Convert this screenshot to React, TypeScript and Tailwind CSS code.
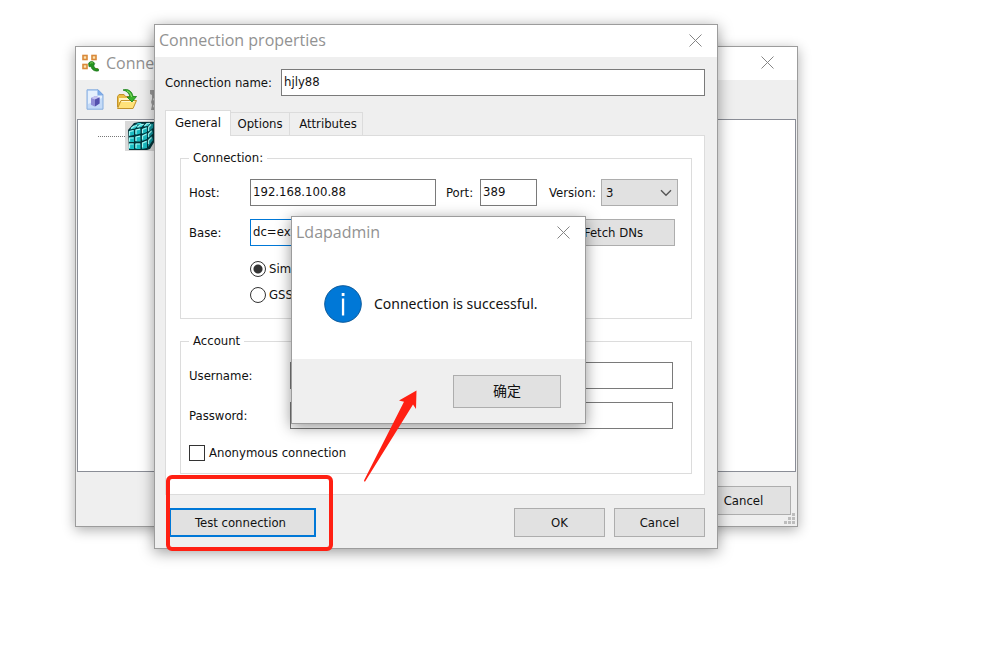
import type { ReactNode } from "react";

function CloseButton({ label }: { label: string }) {
  return (
    <button type="button" aria-label={label} className="flex h-8 w-11 items-center justify-center">
      <svg width="13" height="13" viewBox="0 0 13 13" fill="none" stroke="#858585" strokeWidth="1">
        <path d="M.5.5l12 12M12.5.5l-12 12" />
      </svg>
    </button>
  );
}

function PushButton({ children, className = "" }: { children: ReactNode; className?: string }) {
  return (
    <button
      type="button"
      className={`flex items-center justify-center bg-[#e1e1e1] ${className}`}
    >
      {children}
    </button>
  );
}

function AppIcon() {
  return (
    <svg width="18" height="18" viewBox="0 0 18 18" fill="none">
      <g fill="#fde3ae" stroke="#d9893a" strokeWidth="1.6">
        <rect x="1" y="1.5" width="4" height="4" />
        <rect x="10" y="1.5" width="4" height="4" />
        <rect x="1" y="10.5" width="4" height="4" />
      </g>
      <path d="M12 14h4v3h-3z" fill="#d9a05a" />
      <path d="M6.500 9.500c1-2 3-2.500 5-1.500l1.200 1.500-1 2.500 1.800 2.500 3 .5v2c-3 .5-5.500-.5-6.800-2.500l-.7-2-2 .2z" fill="#259320" stroke="#146b14" strokeWidth=".6" />
      <path d="M8 9.500c1-1 2-1 3-.5" stroke="#7fd65c" />
    </svg>
  );
}

function NewIcon() {
  return (
    <svg width="18" height="21" viewBox="0 0 18 21" fill="none">
      <path d="M1 .8h11l5 5v14.400H1z" fill="#c4dbf8" stroke="#86addf" />
      <path d="M2 2h9v5h5v2L2 15z" fill="#f4f9ff" opacity=".7" />
      <path d="M12 .8v5h5z" fill="#7fadea" stroke="#6f9cdb" strokeWidth=".6" />
      <path d="M5 9l4.500-2 4 1.500v6l-5 3L5 15.700z" fill="#8f8cd6" />
      <path d="M5 9l4.500-2 4 1.500-4.500 2z" fill="#c4c3f0" />
      <path d="M9 10.500l4.500-2v6l-4.500 3z" fill="#5451ad" />
    </svg>
  );
}

function OpenIcon() {
  return (
    <svg width="22" height="21" viewBox="0 0 22 21" fill="none">
      <path d="M1.500 18V7.500l1.500-2h5l1.500 2h7V12" fill="#e9bd45" stroke="#c2922a" />
      <path d="M3 9h12v4H3z" fill="#fff3c0" />
      <path d="M1.500 19.500l3.500-8h15.500l-3.500 8z" fill="#ffe27a" stroke="#c2922a" strokeLinejoin="round" />
      <path d="M5.500 12.500h13" stroke="#fff7cf" />
      <path d="M7 1c5-1.500 9 1 10 6.500h3.500L16 13l-5-5h3C13 4 11 2 7 1z" fill="#39b32c" stroke="#187c19" strokeWidth=".8" strokeLinejoin="round" />
      <path d="M11 2c2.500.8 4 3 4.500 6" stroke="#8de070" />
    </svg>
  );
}

function PropertiesIcon() {
  return (
    <svg width="18" height="20" viewBox="0 0 18 20">
      <path d="M0 0h8v3H5l1 3-3 3 2 4-2 3 2 4H1l1-5-1-3 1-3V5L0 4z" fill="#9c9c9c" />
    </svg>
  );
}

function CubeIcon() {
  return (
    <svg width="30" height="30" viewBox="0 0 30 30" strokeLinejoin="round">
      <path d="M1 9l6-7 5-1h16l1 17-6 10-3 1H2z" fill="#04343a" />
      <g fill="#1bbcc2">
        <path d="M2 10l5-1v5l-5 1zM8.500 8.500l5-1v5l-5 1.500zM15 8l5-2v5l-5 2z" />
        <path d="M2 16.500l5-.5v5H2zM8.500 15.500l5-1v6h-5zM15 14.500l5-2.500v6l-5 2z" />
        <path d="M2 22.500h5V28H2zM8.500 22.500h5V28h-5zM15 21.500l5-2V27l-5 1z" />
      </g>
      <g fill="#35d3d5">
        <path d="M3 8.500L6.500 5l4.500-.7L8 7.500zM9.500 7l3.500-3.500 4.500-.7L14.500 6z" />
        <path d="M8 4l3-2h4l-2 1.500zM16.500 5.500l3-3 4-.5-2.500 3z" />
      </g>
      <g fill="#129ba3">
        <path d="M21 6l3-3.500 2 .5v4l-5 4zM21 12.500l4-4 1 4-5 5zM21 19l4-4 1 4-5 7z" />
        <path d="M26.500 2h2v5l-1.500 2zM27 10l1.500-1v6L27 17z" />
      </g>
      <g fill="none" stroke="#a6fbf7" strokeWidth="1.200">
        <path d="M2.500 14.500V10.500l4-.8M9 13V9l4-.8M15.500 12V8.500l4-1.500" />
        <path d="M2.500 20.500V17h4M9 20v-4l4-.8M15.500 18.500V15l4-2" />
        <path d="M2.500 27v-4h4M9 27v-4h4M15.500 26.500V22l4-1.600" />
        <path d="M4 7.500L7 5l3-.5M10.500 6l3-2.200 3-.5M17.500 5l2.500-2.500 3-.2M21.500 10V6.500L24 3.500M21.500 16v-3l3-3M21.500 23v-3.500l3-3" />
      </g>
    </svg>
  );
}

function InfoIcon() {
  return (
    <svg width="38" height="38" viewBox="0 0 38 38">
      <circle cx="19" cy="19" r="18.300" fill="#0078d7" stroke="#0b5a9c" />
      <rect x="17.700" y="8" width="2.800" height="3" fill="#fff" />
      <rect x="17.900" y="13.500" width="2.300" height="17" fill="#fff" />
    </svg>
  );
}

const titleBar = "flex items-center bg-white pb-0.5";
const title = "flex-1 font-['Open_Sans','Noto_Sans',sans-serif] text-base text-[#929292]";

function ConnectionsWindow() {
  return (
    <section
      aria-label="Connections"
      className="absolute left-[75px] top-[46px] flex h-[481px] w-[723px] flex-col border border-[#9c9c9c] bg-[#efefef] shadow-[0_3px_12px_rgba(0,0,0,0.32)]"
    >
      <header className={`h-[33px] gap-1.5 pl-1.5 pr-2 ${titleBar}`}>
        <AppIcon />
        <h2 className={title}>Connections</h2>
        <CloseButton label="Close connections" />
      </header>
      <div className="flex h-[39px] items-center gap-3 pl-2.5">
        <button type="button" aria-label="New connection"><NewIcon /></button>
        <button type="button" aria-label="Open"><OpenIcon /></button>
        <button type="button" aria-label="Properties"><PropertiesIcon /></button>
      </div>
      <div className="mx-px flex flex-1 items-start border border-[#8a8d96] bg-white pl-5">
        <span className="mt-4 w-[27px] border-t border-dotted border-[#777]" />
        <span className="mt-px bg-[#d9d9d9] pl-0.5"><CubeIcon /></span>
      </div>
      <footer className="relative flex h-[54px] items-start justify-end pr-1.5 pt-3.5">
        <PushButton className="h-[29px] w-[91px] border border-[#adadad] pr-1">Cancel</PushButton>
        <svg width="11" height="11" viewBox="0 0 11 11" fill="#bdbdbd" className="absolute bottom-0.5 right-0.5">
          <path d="M8 0h3v3H8zM4 4h3v3H4zM8 4h3v3H8zM0 8h3v3H0zM4 8h3v3H4zM8 8h3v3H8z" />
        </svg>
      </footer>
    </section>
  );
}

const field = "border border-[#7a7a7a] bg-white px-0.5 pb-0.5 outline-none";

function PropertiesWindow() {
  return (
    <section
      aria-label="Connection properties"
      className="absolute left-[154px] top-[24px] flex w-[564px] flex-col border border-[#9c9c9c] bg-[#efefef] shadow-[0_3px_14px_rgba(0,0,0,0.4)]"
    >
      <header className={`h-8 pl-1 ${titleBar}`}>
        <h2 className={title}>Connection properties</h2>
        <CloseButton label="Close properties" />
      </header>

      <div className="flex items-center pl-2.5 pr-3 pt-3">
        <label htmlFor="name" className="w-[116px] whitespace-nowrap">Connection name:</label>
        <input id="name" defaultValue="hjly88" className={`h-[27px] min-w-0 flex-1 ${field}`} />
      </div>

      <div role="tablist" className="mt-3.5 flex items-end pl-2.5">
        <button type="button" role="tab" aria-selected="true" className="relative -mb-px h-[26px] w-[66px] border border-b-0 border-[#dcdcdc] bg-white pb-0.5">
          General
        </button>
        <button type="button" role="tab" aria-selected="false" className="h-[23px] w-[59px] border-r border-t border-[#dcdcdc]">
          Options
        </button>
        <button type="button" role="tab" aria-selected="false" className="h-[23px] w-[73px] border-r border-t border-[#dcdcdc] pl-1">
          Attributes
        </button>
      </div>

      <div className="ml-2.5 mr-3 border border-[#dcdcdc] bg-white pb-5 pl-3.5 pr-3 pt-3">
        <fieldset className="h-[171px] border border-[#dcdcdc] px-2">
          <legend className="px-1 leading-5">Connection:</legend>
          <div className="mt-[11px] flex items-center">
            <label htmlFor="host" className="w-[61px]">Host:</label>
            <input id="host" defaultValue="192.168.100.88" className={`h-[27px] w-[186px] ${field}`} />
            <label htmlFor="port" className="ml-2.5 w-[34px] whitespace-nowrap">Port:</label>
            <input id="port" defaultValue="389" className={`h-[27px] w-[57px] ${field}`} />
            <label htmlFor="version" className="ml-3 w-[52px] whitespace-nowrap">Version:</label>
            <span className="relative">
              <select id="version" className="h-[27px] w-[77px] appearance-none border border-[#adadad] bg-[#e1e1e1] px-1">
                <option>3</option>
              </select>
              <svg width="12" height="8" viewBox="0 0 12 8" fill="none" stroke="#555" strokeWidth="1.400" className="pointer-events-none absolute right-1.5 top-2.5">
                <path d="M1 1.200l5 5 5-5" />
              </svg>
            </span>
          </div>
          <div className="mt-[13px] flex items-center">
            <label htmlFor="base" className="w-[61px]">Base:</label>
            <input id="base" defaultValue="dc=ex" className="h-[27px] w-[290px] border border-[#0078d7] px-0.5 pb-0.5 outline-none" />
            <PushButton className="ml-3 h-[27px] w-[123px] border border-[#adadad]">Fetch DNs</PushButton>
          </div>
          <div className="ml-[61px] mt-[13px] flex flex-col gap-1.5">
            <label className="flex h-5 items-center gap-[3px]">
              <input
                type="radio"
                name="auth"
                defaultChecked
                className="size-4 appearance-none rounded-full border border-[#333] bg-white checked:bg-[radial-gradient(circle,#333_0_4px,#fff_5px)]"
              />
              Simple authentication
            </label>
            <label className="flex h-5 items-center gap-[3px]">
              <input
                type="radio"
                name="auth"
                className="size-4 appearance-none rounded-full border border-[#333] bg-white"
              />
              GSS-API
            </label>
          </div>
        </fieldset>

        <fieldset className="mt-3 border border-[#dcdcdc] px-2 pb-2.5">
          <legend className="px-1 leading-5">Account</legend>
          <div className="mt-[11px] flex items-center pr-2.5">
            <label htmlFor="username" className="w-[101px]">Username:</label>
            <input id="username" className={`h-[27px] min-w-0 flex-1 ${field}`} />
          </div>
          <div className="mt-[13px] flex items-center pr-2.5">
            <label htmlFor="password" className="w-[101px]">Password:</label>
            <input id="password" type="password" className={`h-[27px] min-w-0 flex-1 ${field}`} />
          </div>
          <label className="mt-3.5 flex h-5 items-center gap-1">
            <input type="checkbox" className="size-4 appearance-none border border-[#333] bg-white" />
            Anonymous connection
          </label>
        </fieldset>
      </div>

      <footer className="flex items-center gap-[9px] pb-[11px] pl-3.5 pr-3 pt-[13px]">
        <PushButton className="mr-auto h-[29px] w-[147px] border-2 border-[#0078d7] pr-1">Test connection</PushButton>
        <PushButton className="h-[29px] w-[91px] border border-[#adadad]">OK</PushButton>
        <PushButton className="h-[29px] w-[91px] border border-[#adadad]">Cancel</PushButton>
      </footer>
    </section>
  );
}

function MessageDialog() {
  return (
    <section
      role="dialog"
      aria-label="Ldapadmin"
      className="absolute left-[291px] top-[216px] w-[295px] border border-[#9c9c9c] bg-white shadow-[0_3px_14px_rgba(0,0,0,0.42)]"
    >
      <header className={`h-8 pl-1 ${titleBar}`}>
        <h2 className={title}>Ldapadmin</h2>
        <CloseButton label="Close message" />
      </header>
      <div className="flex h-[110px] items-center gap-3 pl-8 font-['Noto_Sans',sans-serif] text-sm">
        <InfoIcon />
        <p>Connection is successful.</p>
      </div>
      <footer className="flex h-16 items-center justify-end bg-[#efefef] pr-6 text-sm">
        <PushButton className="h-[33px] w-[108px] border border-[#adadad]">确定</PushButton>
      </footer>
    </section>
  );
}

export default function App() {
  return (
    <main className="relative min-h-screen overflow-hidden bg-white font-['DejaVu_Sans_Condensed','Noto_Sans_CJK_SC',sans-serif] text-[13px] leading-5 text-[#111]">
      <ConnectionsWindow />
      <PropertiesWindow />
      <MessageDialog />
      <div className="pointer-events-none absolute left-[166px] top-[475px] h-[76px] w-[167px] rounded-md border-4 border-[#ff2013]" />
      <svg width="56" height="94" viewBox="0 0 56 94" className="pointer-events-none absolute left-[363px] top-[389px]">
        <path d="M53.500 1.500L36 11.500l5 1.300L1 91.500l.8 1.500L50 15.500l3 4.500z" fill="#ff2013" />
      </svg>
    </main>
  );
}
